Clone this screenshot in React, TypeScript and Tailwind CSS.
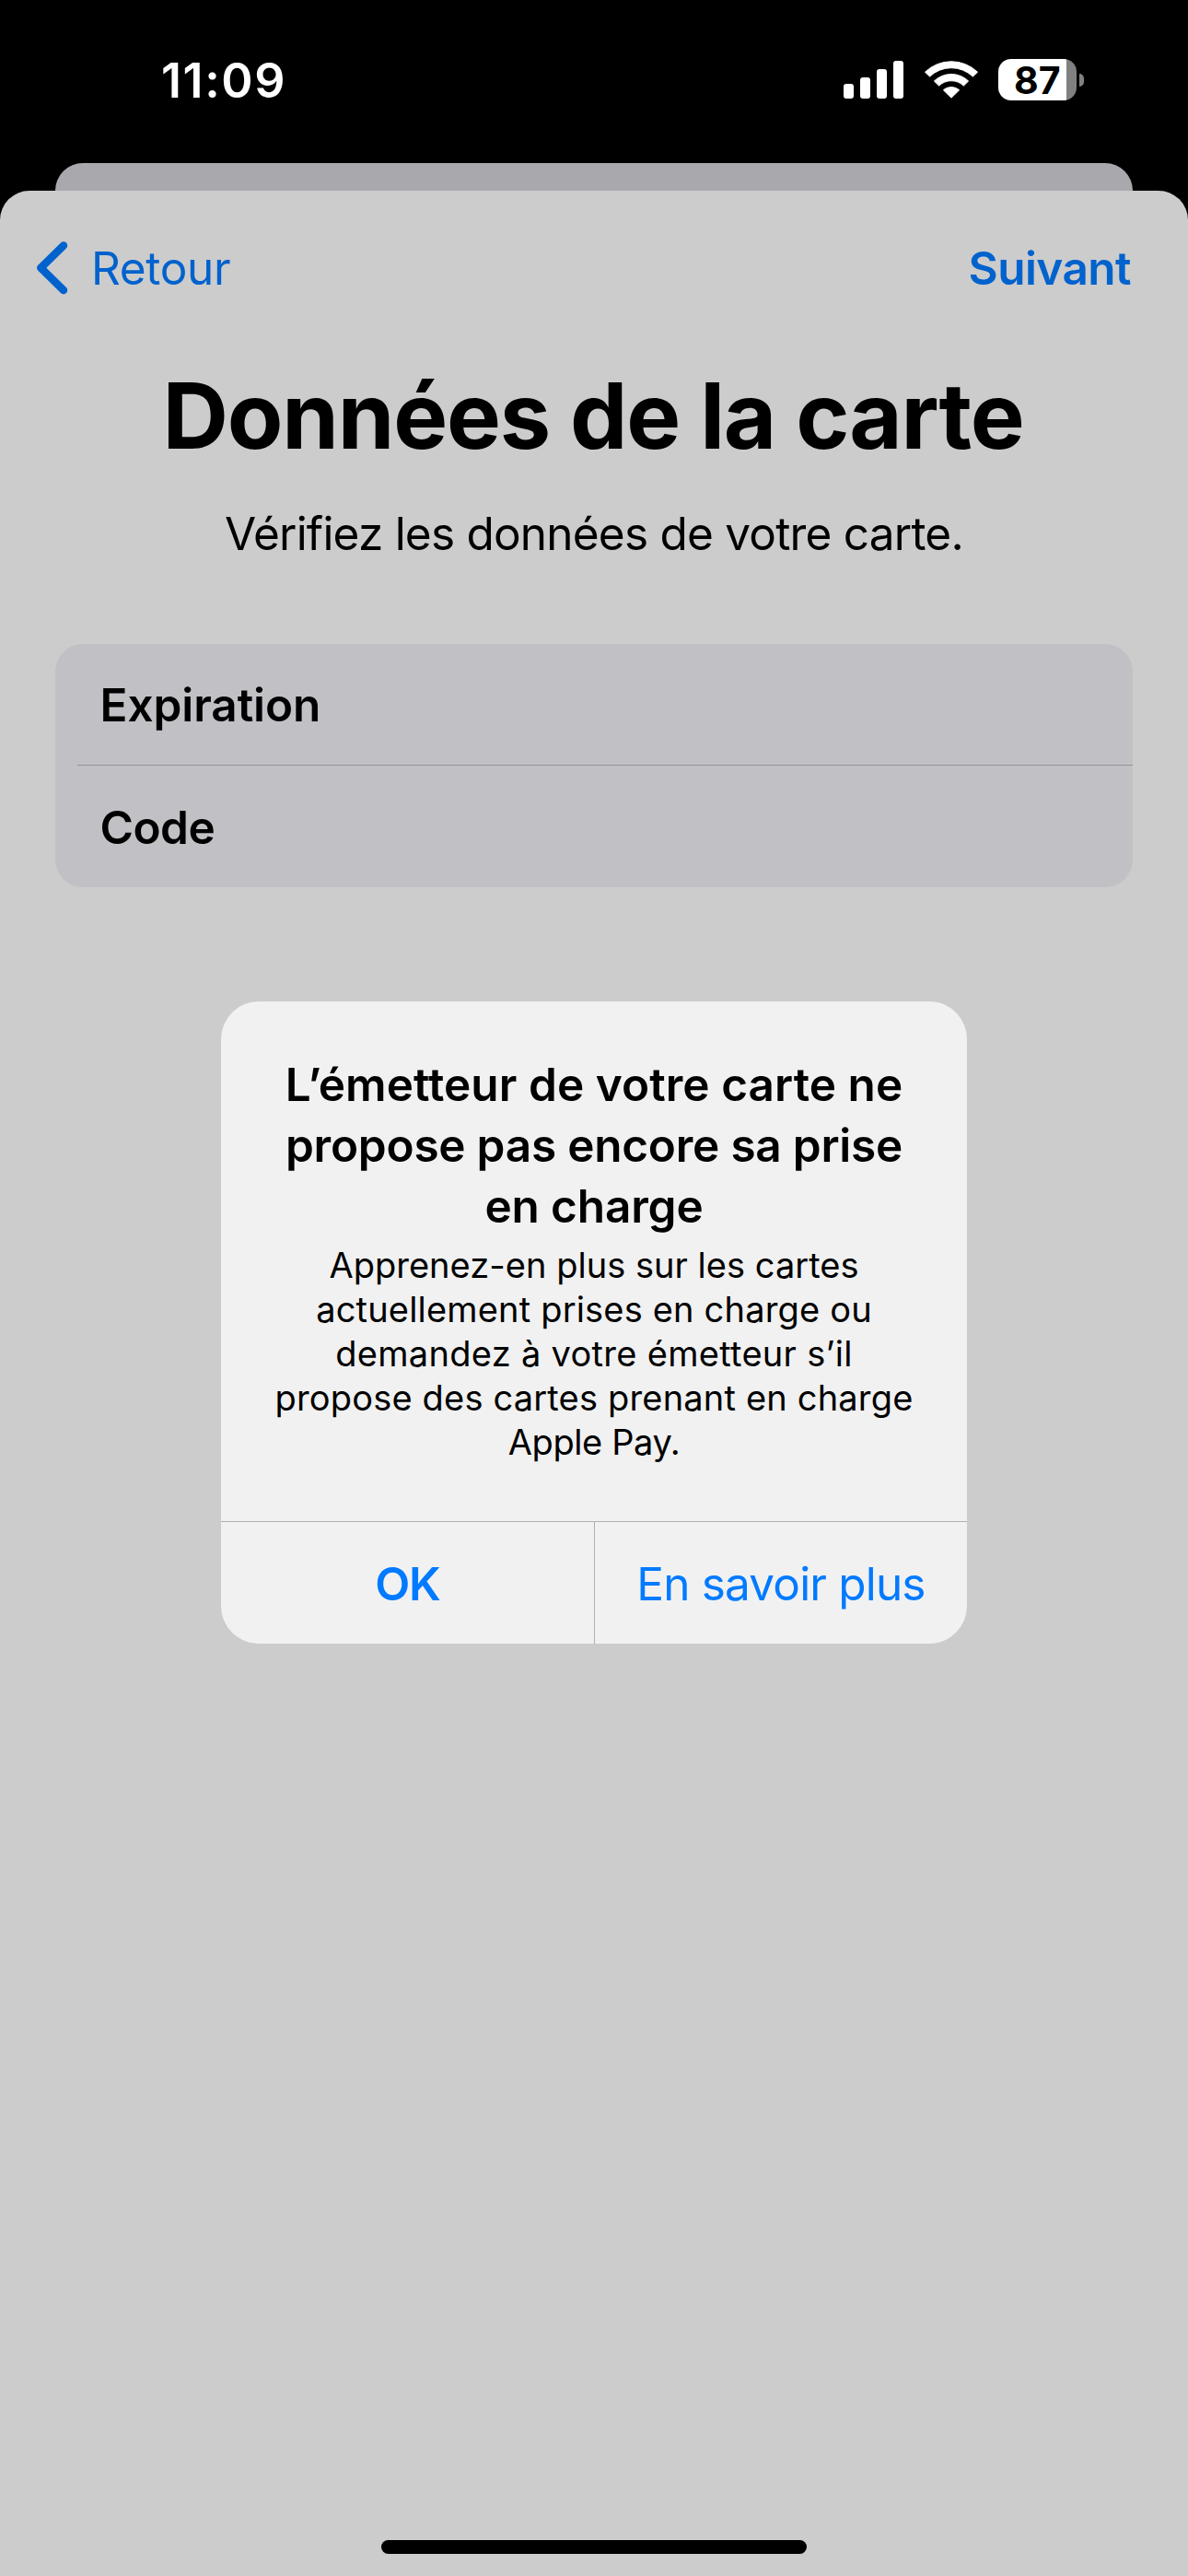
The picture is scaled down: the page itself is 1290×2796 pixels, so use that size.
import React from 'react';

function SignalIcon() {
  return (
    <svg width="65" height="41" viewBox="0 0 65 41" fill="white" aria-hidden="true">
      <rect x="0" y="25" width="11" height="16" rx="3" />
      <rect x="18" y="18" width="11" height="23" rx="3" />
      <rect x="36" y="9" width="11" height="32" rx="3" />
      <rect x="54" y="0" width="11" height="41" rx="3" />
    </svg>
  );
}

function WifiIcon() {
  return (
    <svg width="60" height="44" viewBox="-30 -43 60 44" fill="white" aria-hidden="true">
      <g stroke="white" strokeWidth="1" strokeLinejoin="round">
        <path d="M-28.5 -28.8A41.2 41.2 0 0 1 28.5 -28.8L23.4 -23.9A33.8 33.8 0 0 0 -23.4 -23.9Z" />
        <path d="M-18.6 -19A26.8 26.8 0 0 1 18.6 -19L13.4 -13.9A19.3 19.3 0 0 0 -13.4 -13.9Z" />
        <path d="M-8.6 -9.2A12.9 12.9 0 0 1 8.6 -9.2L0 -0.8Z" />
      </g>
    </svg>
  );
}

function Battery() {
  return (
    <div className="flex items-center gap-[3px]">
      <div className="flex h-[45px] w-[85px] items-center rounded-[14px] bg-[linear-gradient(to_right,#ffffff_74px,#808080_74px)] pl-[17px]">
        <span className="text-[41px] leading-[44px] font-bold text-black">87</span>
      </div>
      <div className="h-[14px] w-[5px] rounded-r-[7px] bg-[#808080]" />
    </div>
  );
}

function StatusBar() {
  return (
    <header className="flex h-[177px] items-start justify-between pr-[113px] pl-[175px]">
      <span className="pt-[58px] text-[52px] leading-[60px] font-semibold tracking-[1.6px] text-white">
        11:09
      </span>
      <div className="flex items-start pt-[64px]">
        <div className="mt-[2px] mr-[22px]">
          <SignalIcon />
        </div>
        <div className="mr-[21px]">
          <WifiIcon />
        </div>
        <Battery />
      </div>
    </header>
  );
}

function NavBar() {
  return (
    <nav className="flex h-[168px] items-center justify-between pr-[62px] pl-[38px] text-[49.5px] leading-[60px] text-[#0062cd]">
      <button className="flex items-center">
        <svg
          width="36"
          height="60"
          viewBox="38 261 36 60"
          fill="none"
          stroke="currentColor"
          strokeWidth="8.5"
          strokeLinecap="round"
          strokeLinejoin="round"
          className="mr-[25px]"
          aria-hidden="true"
        >
          <path d="M69 266.5L44.3 290.7L69 315" />
        </svg>
        <span className="tracking-[-0.33px]">Retour</span>
      </button>
      <button className="font-semibold tracking-[-0.55px]">Suivant</button>
    </nav>
  );
}

function CardForm() {
  return (
    <div className="mx-[60px] mt-[90px] flex h-[264px] flex-col rounded-[30px] bg-[#c1c0c5] pl-[24px] text-[49.5px] font-semibold text-black">
      <div className="h-[132px] border-b border-[#96959a] pl-[24.5px] leading-[133px] tracking-[-0.07px]">
        Expiration
      </div>
      <div className="h-[132px] pl-[24.5px] leading-[134px] tracking-[-0.5px]">Code</div>
    </div>
  );
}

function Alert() {
  return (
    <div
      role="alertdialog"
      className="absolute top-[1087px] left-[240px] flex h-[697px] w-[810px] flex-col rounded-[41px] bg-[#f1f1f1] text-center"
    >
      <div className="h-[564px] pt-[57px]">
        <h2 className="text-[49.5px] leading-[66px] font-semibold text-black">
          <span className="block tracking-[0.06px]">L’émetteur de votre carte ne</span>
          <span className="block tracking-[-0.23px]">propose pas encore sa prise</span>
          <span className="block tracking-[-0.14px]">en charge</span>
        </h2>
        <p className="mt-[7px] text-[38px] leading-[48px] text-black">
          <span className="block tracking-[0.03px]">Apprenez-en plus sur les cartes</span>
          <span className="block tracking-[0.18px]">actuellement prises en charge ou</span>
          <span className="block tracking-[0.3px]">demandez à votre émetteur s’il</span>
          <span className="block tracking-[0.18px]">propose des cartes prenant en charge</span>
          <span className="block tracking-[-0.39px]">Apple Pay.</span>
        </p>
      </div>
      <div className="flex h-[133px] border-t border-[#b1b1b1] text-[49.5px] leading-[134px] text-[#007aff]">
        <button className="w-[406px] border-r border-[#b1b1b1] font-semibold tracking-[-1.2px]">OK</button>
        <button className="w-[404px] tracking-[-0.83px]">En savoir plus</button>
      </div>
    </div>
  );
}

export default function App() {
  return (
    <div className="relative flex h-[2796px] w-[1290px] flex-col overflow-hidden bg-black font-['Inter','Liberation_Sans',sans-serif]">
      <StatusBar />
      <div className="mx-[60px] h-[60px] shrink-0 rounded-t-[30px] bg-[#a9a8ad]" />
      <main className="relative -mt-[30px] flex grow flex-col rounded-t-[32px] bg-[#cccccc]">
        <NavBar />
        <h1 className="mt-[16px] pr-[2px] text-center text-[99px] leading-[120px] font-bold tracking-[-1.22px] text-black">
          Données de la carte
        </h1>
        <p className="mt-[38px] text-center text-[49.5px] leading-[60px] tracking-[-0.78px] text-black">
          Vérifiez les données de votre carte.
        </p>
        <CardForm />
        <div className="mx-auto mt-auto mb-[24px] h-[15px] w-[462px] rounded-full bg-black" />
      </main>
      <Alert />
    </div>
  );
}
